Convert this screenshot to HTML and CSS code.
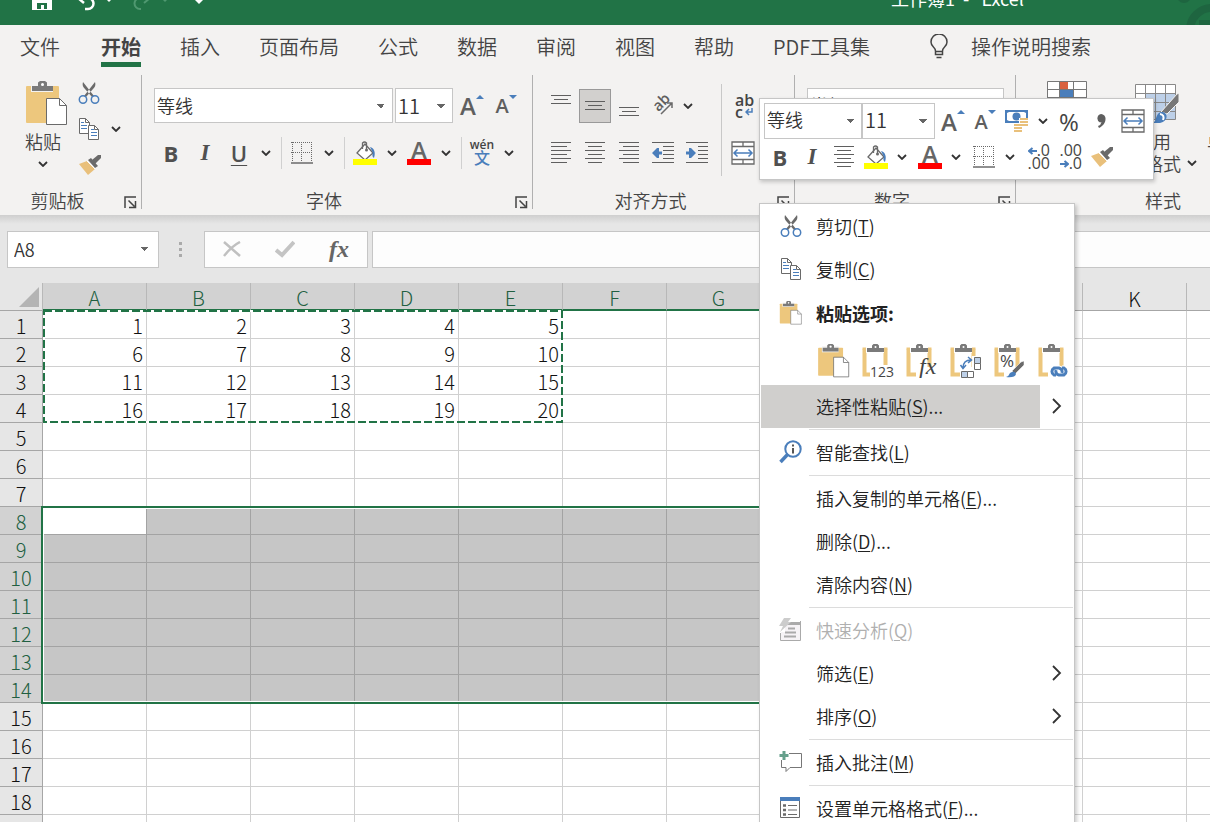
FILE: index.html
```html
<!DOCTYPE html>
<html lang="zh-CN">
<head>
<meta charset="utf-8">
<title>工作簿1 - Excel</title>
<link rel="stylesheet" href="styles.css">
</head>
<body>
<svg class="defs" aria-hidden="true">
  <symbol id="chev" viewBox="0 0 10 6"><path d="M1 1l4 4 4-4" fill="none" stroke="#333" stroke-width="1.8"/></symbol>
  <symbol id="cut" viewBox="0 0 22 24">
    <path d="M5 1c-1 3 0 5 2 7l7 8 2-1zM17 1c1 3 0 5-2 7l-7 8-2-1z" fill="#6a6a6a"/>
    <circle cx="5" cy="18.500" r="3.700" fill="none" stroke="#4a7ebb" stroke-width="1.500"/><circle cx="17" cy="18.500" r="3.700" fill="none" stroke="#4a7ebb" stroke-width="1.500"/>
  </symbol>
  <symbol id="copy" viewBox="0 0 22 24">
    <path d="M1.500 1.500h6l4 4v11h-10z" fill="#fff" stroke="#6a6a6a"/><path d="M7.500 1.500v4h4" fill="none" stroke="#6a6a6a"/>
    <path d="M3 5.500h3M3 8.500h6M3 11.500h6" stroke="#4a7ebb"/>
    <path d="M10.500 8.500h6l4 4v10h-10z" fill="#fff" stroke="#6a6a6a"/><path d="M16.500 8.500v4h4" fill="none" stroke="#6a6a6a"/>
    <path d="M13 12.500h3M13 15.500h6M13 18.500h6" stroke="#4a7ebb"/>
  </symbol>
  <symbol id="brush" viewBox="0 0 24 22">
    <path d="M1 10l8-3 8 8-7 6z" fill="#e9c07b"/><path d="M10 6l3-2 7 8-3 2z" fill="#6a6a6a"/><path d="M14 6l6-5h3v3l-6 6z" fill="#6a6a6a"/><path d="M9 7l8 8" stroke="#fff"/>
  </symbol>
  <symbol id="paste" viewBox="0 0 42 45">
    <rect y="5" width="33" height="37" rx="1" fill="#edc77d"/>
    <path d="M5 3h22v8H5z" fill="#f3f2f1"/><path d="M6 5h6V1.500L14 0h5l2 1.500V5h6v5H6z" fill="#7a7a7a"/><circle cx="16.500" cy="3.500" r="1.500" fill="#fff"/>
    <path d="M20.500 17.500h13l7 7v19h-20z" fill="#fff" stroke="#6a6a6a"/><path d="M33.500 17.500v7h7" fill="none" stroke="#6a6a6a"/>
  </symbol>
  <symbol id="clip" viewBox="0 0 30 34">
    <path d="M2.500 5v25.500H10M23.500 23V5" fill="none" stroke="#edc77d" stroke-width="4"/><path d="M.500 4.500h25" stroke="#edc77d" stroke-width="2"/>
    <path d="M4 1h18v8H4z" fill="#fff"/><path d="M5 4h5V1.500L11.500 0h4L17 1.500V4h5v4H5z" fill="#7a7a7a"/><circle cx="13.500" cy="3" r="1" fill="#fff"/>
  </symbol>
  <symbol id="borders" viewBox="0 0 22 22"><path d="M1.500 0v20M10.500 0v20M20.500 0v20M0 .5h22M0 10.500h22" stroke="#6a6a6a" stroke-dasharray="1 1"/><path d="M0 21h22" stroke="#6a6a6a" stroke-width="1.500"/></symbol>
  <symbol id="bucket" viewBox="0 0 26 24">
    <path d="M13 3l8 9-8 7-8-7z" fill="#fff" stroke="#6a6a6a" stroke-width="1.300"/><path d="M10.500 8V2q2-2 4 0v6" fill="none" stroke="#6a6a6a" stroke-width="1.300"/><circle cx="14.500" cy="9" r="1.500" fill="#6a6a6a"/>
    <path d="M18 6c4 1 6 5 4 11-2-1-2-4-1-5z" fill="#4a7ebb"/><path d="M1 18h24v6H1z" fill="#ff0"/>
  </symbol>
  <symbol id="merge" viewBox="0 0 24 24"><path d="M1 1h22v22H1zM1 5.500h22M1 18.500h22M12 1v4.500M12 18.500V23" fill="#fff" stroke="#6a6a6a" stroke-width="1.300"/><path d="M3 12h18M6.500 8.500L3 12l3.500 3.500M17.500 8.500L21 12l-3.500 3.500" fill="none" stroke="#4a7ebb" stroke-width="1.500"/></symbol>
  <symbol id="launch" viewBox="0 0 13 13"><path d="M1 12V1h11M4.500 4.500l6 6M11.500 5v6.500H5" fill="none" stroke="#444" stroke-width="1.500"/></symbol>
  <symbol id="center" viewBox="0 0 20 22"><path d="M0 .5h20M3 4.500h14M0 8.500h20M3 12.500h14M0 16.500h20M3 20.500h14" stroke="#5f5f5f"/></symbol>
  <symbol id="more" viewBox="0 0 10 16"><path d="M1 1l7 7-7 7" fill="none" stroke="#333" stroke-width="1.800"/></symbol>
  <symbol id="up" viewBox="0 0 8 4"><path d="M0 4l4-4 4 4z" fill="#4a7ebb"/></symbol>
  <symbol id="down" viewBox="0 0 8 4"><path d="M0 0l4 4 4-4z" fill="#4a7ebb"/></symbol>
</svg>

<div class="app">
  <header class="titlebar">
    <button class="qat" aria-label="保存"><svg width="20" height="20" viewBox="0 0 20 20"><path d="M0 0h20v20H0z" fill="#fff"/><path d="M4 1h12v9H4zM5 13h10v6H5z" fill="#217346"/><path d="M9 15h3v5H9z" fill="#fff"/></svg></button>
    <button class="qat undo" aria-label="撤消"><svg width="20" height="22" viewBox="0 0 20 22"><path d="M2 9h10a5 5 0 0 1 0 11H9M8 3L2 9l6 5" fill="none" stroke="#fff" stroke-width="2.500"/></svg></button>
    <svg class="qat-arrow" width="6" height="8"><path d="M0 3h6l-3 3z" fill="#fff"/></svg>
    <button class="qat redo" aria-label="重做"><svg width="20" height="22" viewBox="0 0 20 22"><path d="M18 9H8a5 5 0 0 0 0 11h1M12 3l6 6-6 5" fill="none" stroke="#4f9870" stroke-width="2"/></svg></button>
    <svg class="qat-arrow" width="6" height="8"><path d="M0 3h6l-3 3z" fill="#4f9870"/></svg>
    <svg class="qat-end" width="10" height="8"><path d="M0 3h10l-5 5z" fill="#fff"/></svg>
    <span class="book">工作簿1&nbsp; -&nbsp;&nbsp; Excel</span>
    <svg class="deco" width="40" height="25" viewBox="0 0 40 25"><circle cx="14" cy="-4" r="7" fill="#1e6540"/><circle cx="42" cy="30" r="22" fill="none" stroke="#1e6540" stroke-width="8"/><path d="M29 20h11v5H29z" fill="#1e6540"/></svg>
  </header>

  <nav class="tabs">
    <button class="tab file">文件</button><button class="tab active">开始</button><button class="tab">插入</button><button class="tab">页面布局</button><button class="tab">公式</button><button class="tab">数据</button><button class="tab">审阅</button><button class="tab">视图</button><button class="tab">帮助</button><button class="tab">PDF工具集</button>
    <button class="tab tell"><svg width="18" height="25" viewBox="0 0 18 25"><path d="M5.500 17c0-4-4.500-4-4.500-9a8 8 0 0 1 16 0c0 5-4.500 5-4.500 9v3.500h-7zM5.500 17.500h7M6.500 23.500h5" fill="none" stroke="#444" stroke-width="1.500"/></svg>操作说明搜索</button>
  </nav>

  <div class="ribbon">
    <section class="group clipboard">
      <div class="body">
        <button class="big"><svg class="board" width="42" height="45"><use href="#paste"/></svg><span>粘贴</span><svg class="chev" width="10" height="6"><use href="#chev"/></svg></button>
        <div class="stack">
          <button class="mini" aria-label="剪切"><svg width="22" height="24"><use href="#cut"/></svg></button>
          <button class="mini" aria-label="复制"><svg width="22" height="24"><use href="#copy"/></svg><svg class="chev" width="10" height="6"><use href="#chev"/></svg></button>
          <button class="mini" aria-label="格式刷"><svg width="24" height="22"><use href="#brush"/></svg></button>
        </div>
      </div>
      <footer class="caption"><span>剪贴板</span><button class="launch" aria-label="剪贴板设置"><svg width="13" height="13"><use href="#launch"/></svg></button></footer>
    </section>

    <section class="group font">
      <div class="rows">
        <div class="row">
          <select class="combo face" aria-label="字体"><option>等线</option></select>
          <select class="combo size" aria-label="字号"><option>11</option></select>
          <button class="btn grow" aria-label="增大字号"><b>A</b><svg width="8" height="4"><use href="#up"/></svg></button>
          <button class="btn shrink" aria-label="减小字号"><b>A</b><svg width="8" height="4"><use href="#down"/></svg></button>
        </div>
        <div class="row">
          <button class="btn bold">B</button><button class="btn italic">I</button><button class="btn under">U</button><button class="drop" aria-label="下划线选项"><svg width="10" height="6"><use href="#chev"/></svg></button>
          <i class="sep"></i>
          <button class="btn" aria-label="边框"><svg width="22" height="22"><use href="#borders"/></svg></button><button class="drop" aria-label="边框选项"><svg width="10" height="6"><use href="#chev"/></svg></button>
          <i class="sep"></i>
          <button class="btn" aria-label="填充颜色"><svg width="26" height="24"><use href="#bucket"/></svg></button><button class="drop" aria-label="填充选项"><svg width="10" height="6"><use href="#chev"/></svg></button>
          <button class="btn" aria-label="字体颜色"><b class="color">A</b></button><button class="drop" aria-label="字体颜色选项"><svg width="10" height="6"><use href="#chev"/></svg></button>
          <i class="sep"></i>
          <button class="btn pinyin"><span>wén</span><span class="han">文</span></button><button class="drop" aria-label="拼音选项"><svg width="10" height="6"><use href="#chev"/></svg></button>
        </div>
      </div>
      <footer class="caption"><span>字体</span><button class="launch" aria-label="字体设置"><svg width="13" height="13"><use href="#launch"/></svg></button></footer>
    </section>

    <section class="group align">
      <div class="body">
        <div class="rows">
          <div class="row">
            <button class="btn" aria-label="顶端对齐"><svg width="20" height="22"><path d="M0 .5h20M3 4.500h14M0 8.500h20" stroke="#5f5f5f"/></svg></button>
            <button class="btn on" aria-label="垂直居中"><svg width="20" height="22"><path d="M0 6.500h20M3 10.500h14M0 14.500h20" stroke="#5f5f5f"/></svg></button>
            <button class="btn" aria-label="底端对齐"><svg width="20" height="22"><path d="M0 12.500h20M3 16.500h14M0 20.500h20" stroke="#5f5f5f"/></svg></button>
            <button class="btn orient" aria-label="方向"><svg width="22" height="22" viewBox="0 0 22 22"><text x="3" y="17" transform="rotate(-45 5 13)" class="ab">ab</text><path d="M9 19L20 8M15 8h5v5" fill="none" stroke="#6a6a6a" stroke-width="1.500"/></svg></button><button class="drop tight" aria-label="方向选项"><svg width="10" height="6"><use href="#chev"/></svg></button>
          </div>
          <div class="row">
            <button class="btn" aria-label="左对齐"><svg width="20" height="22"><path d="M0 .5h20M0 4.500h16M0 8.500h20M0 12.500h16M0 16.500h20M0 20.500h16" stroke="#5f5f5f"/></svg></button>
            <button class="btn" aria-label="居中"><svg width="20" height="22"><use href="#center"/></svg></button>
            <button class="btn" aria-label="右对齐"><svg width="20" height="22"><path d="M0 .5h20M4 4.500h16M0 8.500h20M4 12.500h16M0 16.500h20M4 20.500h16" stroke="#5f5f5f"/></svg></button>
            <button class="btn" aria-label="减少缩进"><svg width="22" height="22"><path d="M0 .5h22M11 4.500h11M11 8.500h11M11 12.500h11M11 16.500h11M0 20.500h22" stroke="#5f5f5f"/><path d="M0 11l5-5h2v3.500h3v3H7V16H5z" fill="#4a7ebb"/></svg></button>
            <button class="btn" aria-label="增加缩进"><svg width="22" height="22"><path d="M0 .5h22M12 4.500h10M12 8.500h10M12 12.500h10M12 16.500h10M0 20.500h22" stroke="#5f5f5f"/><path d="M10 11L5 6H3v3.500H0v3h3V16h2z" fill="#4a7ebb"/></svg></button>
          </div>
        </div>
        <i class="rule"></i>
        <div class="rows">
          <div class="row"><button class="btn wrap" aria-label="自动换行"><span>ab</span><span>c<svg width="8" height="8"><path d="M7 0v4H1M4 1L1 4l3 3" fill="none" stroke="#4a7ebb" stroke-width="1.500"/></svg></span></button></div>
          <div class="row"><button class="btn" aria-label="合并后居中"><svg width="24" height="24"><use href="#merge"/></svg></button></div>
        </div>
      </div>
      <footer class="caption"><span>对齐方式</span><button class="launch" aria-label="对齐设置"><svg width="13" height="13"><use href="#launch"/></svg></button></footer>
    </section>

    <section class="group number">
      <div class="rows"><div class="row"><select class="combo format" aria-label="数字格式"><option>常规</option></select></div></div>
      <footer class="caption"><span>数字</span><button class="launch" aria-label="数字设置"><svg width="13" height="13"><use href="#launch"/></svg></button></footer>
    </section>

    <section class="group style">
      <div class="body">
        <button class="big wide"><svg width="40" height="42" viewBox="0 0 40 42"><path d="M.5.500h39v41H.5zM0 8.500h40M0 16.500h40M12.500 0v42M26.500 0v42" fill="#fff" stroke="#777"/><path d="M13 1h8v7h-8z" fill="#d9623f"/><path d="M13 9h13v7H13z" fill="#4a7ebb"/></svg><span>条件格式</span></button>
        <button class="big wide"><svg class="tablefmt" width="46" height="42" viewBox="0 0 46 42"><path d="M1.500 3.500h40v35h-40z" fill="#fff"/><path d="M11 12h30v26H11z" fill="#bdd0e8"/><path d="M1.500 3.500h40v35h-40zM1 12.500h41M1 21.500h41M1 30.500h41M11.500 3v35M21.500 3v35M31.500 3v35" fill="none" stroke="#888"/><path d="M27 31L43 13l2-1v9L33 33z" fill="#777" stroke="#f3f2f1"/><path d="M18 42c5 0 3-11 10-11 6 0 7 9-2 11z" fill="#4a7ebb"/><path d="M26 33q5 1 3 6" fill="none" stroke="#fff" stroke-width="2"/></svg><span>套用</span><span>表格格式<svg class="chev" width="10" height="6"><use href="#chev"/></svg></span></button>
        <button class="big wide cellstyle"><svg width="42" height="42"><path d="M5.500.500h36v41h-36z" fill="#fff" stroke="#999"/></svg><span>单元格</span><span>样式</span></button>
      </div>
      <footer class="caption"><span>样式</span></footer>
    </section>
  </div>

  <div class="formula">
    <select class="combo name" aria-label="名称框"><option>A8</option></select>
    <svg class="dots" width="3" height="15"><path d="M0 0h3v3H0zM0 6h3v3H0zM0 12h3v3H0z" fill="#aaa"/></svg>
    <div class="fxbox">
      <button aria-label="取消"><svg width="18" height="16"><path d="M1 1l16 14M17 1Q9 5 1 15" fill="none" stroke="#c0c0c0" stroke-width="2.500"/></svg></button>
      <button aria-label="输入"><svg width="20" height="18"><path d="M1 10l6 5L19 2" fill="none" stroke="#c4c4c4" stroke-width="4"/></svg></button>
      <button class="fx" aria-label="插入函数">fx</button>
    </div>
    <input class="input" type="text" aria-label="编辑栏">
  </div>

  <main class="sheet">
    <table class="grid">
      <colgroup><col class="rowhead"><col span="12" class="col"></colgroup>
      <thead><tr class="heads"><th class="corner"><svg width="20" height="20"><path d="M20 0v20H0z" fill="#b4b4b4"/></svg></th><th class="sel">A</th><th class="sel">B</th><th class="sel">C</th><th class="sel">D</th><th class="sel">E</th><th class="sel">F</th><th class="sel">G</th><th class="sel">H</th><th>I</th><th>J</th><th>K</th><th>L</th></tr></thead>
      <tbody>
        <tr><th>1<td>1<td>2<td>3<td>4<td>5<td><td><td><td><td><td><td>
        <tr><th>2<td>6<td>7<td>8<td>9<td>10<td><td><td><td><td><td><td>
        <tr><th>3<td>11<td>12<td>13<td>14<td>15<td><td><td><td><td><td><td>
        <tr><th>4<td>16<td>17<td>18<td>19<td>20<td><td><td><td><td><td><td>
        <tr><th>5<td><td><td><td><td><td><td><td><td><td><td><td>
        <tr><th>6<td><td><td><td><td><td><td><td><td><td><td><td>
        <tr><th>7<td><td><td><td><td><td><td><td><td><td><td><td>
      </tbody>
      <tbody class="picked">
        <tr><th>8<td class="cursor"><td><td><td><td><td><td><td><td><td><td><td>
        <tr><th>9<td><td><td><td><td><td><td><td><td><td><td><td>
        <tr><th>10<td><td><td><td><td><td><td><td><td><td><td><td>
        <tr><th>11<td><td><td><td><td><td><td><td><td><td><td><td>
        <tr><th>12<td><td><td><td><td><td><td><td><td><td><td><td>
        <tr><th>13<td><td><td><td><td><td><td><td><td><td><td><td>
        <tr><th>14<td><td><td><td><td><td><td><td><td><td><td><td>
      </tbody>
      <tbody>
        <tr><th>15<td><td><td><td><td><td><td><td><td><td><td><td>
        <tr><th>16<td><td><td><td><td><td><td><td><td><td><td><td>
        <tr><th>17<td><td><td><td><td><td><td><td><td><td><td><td>
        <tr><th>18<td><td><td><td><td><td><td><td><td><td><td><td>
        <tr><th><td><td><td><td><td><td><td><td><td><td><td><td>
      </tbody>
    </table>
    <svg class="ants" width="521" height="113"><path d="M1 1h518v111H1z" fill="none" stroke="#fff" stroke-width="2"/><path d="M1 1h518v111H1z" fill="none" stroke="#217346" stroke-width="2" stroke-dasharray="8 3"/></svg>
    <div class="outline"></div>
  </main>

  <div class="float">
    <div class="row">
      <select class="combo face" aria-label="字体"><option>等线</option></select><select class="combo size" aria-label="字号"><option>11</option></select>
      <button class="btn grow" aria-label="增大字号"><b>A</b><svg width="8" height="4"><use href="#up"/></svg></button>
      <button class="btn shrink" aria-label="减小字号"><b>A</b><svg width="8" height="4"><use href="#down"/></svg></button>
      <button class="btn" aria-label="会计数字格式"><svg width="24" height="24" viewBox="0 0 24 24"><path d="M0 1h23v13H0z" fill="#4a7ebb"/><path d="M2 4l2-1h15l2 1v7l-2 1H4l-2-1z" fill="#fff"/><circle cx="11.500" cy="7.500" r="4" fill="#4a7ebb"/><path d="M14 9h9v9h-6v5H8v-8h6z" fill="#fff"/><path d="M15 10h8M15 13h8M15 16h8M9 16h8M9 19h8M9 22h8" stroke="#e9c07b" stroke-width="2.200"/></svg></button><button class="drop" aria-label="货币选项"><svg width="10" height="6"><use href="#chev"/></svg></button>
      <button class="btn percent">%</button>
      <button class="btn" aria-label="千位分隔样式"><svg width="10" height="14"><path d="M5 0a4.500 4.500 0 0 0-1 8.500L5.500 8Q5 11 2 12l1 2c4-2 6.500-5 6.500-9A4.500 4.500 0 0 0 5 0" fill="#5f5f5f"/></svg></button>
      <button class="btn" aria-label="合并后居中"><svg width="24" height="24"><use href="#merge"/></svg></button>
    </div>
    <div class="row second">
      <button class="btn bold">B</button><button class="btn italic">I</button>
      <button class="btn" aria-label="居中"><svg width="20" height="22"><use href="#center"/></svg></button>
      <button class="btn" aria-label="填充颜色"><svg width="26" height="24"><use href="#bucket"/></svg></button><button class="drop" aria-label="填充选项"><svg width="10" height="6"><use href="#chev"/></svg></button>
      <button class="btn" aria-label="字体颜色"><b class="color">A</b></button><button class="drop" aria-label="字体颜色选项"><svg width="10" height="6"><use href="#chev"/></svg></button>
      <button class="btn" aria-label="边框"><svg width="22" height="22"><use href="#borders"/></svg></button><button class="drop" aria-label="边框选项"><svg width="10" height="6"><use href="#chev"/></svg></button>
      <button class="btn decimal"><span><svg width="9" height="8"><path d="M9 4H1M4.500 1L1 4l3.500 3" fill="none" stroke="#4a7ebb" stroke-width="2"/></svg>.0</span><span>.00</span></button>
      <button class="btn decimal"><span>.00</span><span><svg width="9" height="8"><path d="M0 4h8M4.500 1L8 4 4.500 7" fill="none" stroke="#4a7ebb" stroke-width="2"/></svg>.0</span></button>
      <button class="btn" aria-label="格式刷"><svg width="24" height="22"><use href="#brush"/></svg></button>
    </div>
  </div>

  <div class="menu" role="menu">
    <button class="item"><svg width="22" height="24"><use href="#cut"/></svg><span>剪切(<u>T</u>)</span></button>
    <button class="item"><svg width="22" height="24"><use href="#copy"/></svg><span>复制(<u>C</u>)</span></button>
    <div class="item head"><svg width="22" height="24"><use href="#paste"/></svg><span>粘贴选项:</span></div>
    <div class="pastes">
      <button aria-label="粘贴"><svg width="32" height="34"><use href="#paste"/></svg></button>
      <button aria-label="值"><svg width="32" height="34"><use href="#clip" width="30" height="34"/><path d="M8 21h24v13H8z" fill="#fff"/><text x="8" y="33" class="t123">123</text></svg></button>
      <button aria-label="公式"><svg width="32" height="34"><use href="#clip" width="30" height="34"/><text x="13" y="30" class="tfx">fx</text></svg></button>
      <button aria-label="转置"><svg width="32" height="34"><use href="#clip" width="30" height="34"/><path d="M22 12h9v21H10v-7h12z" fill="#fff"/><path d="M24.500 13.500h6v6h-6zM11.500 27.500h6v6h-6z" fill="#bdd0e8" stroke="#6a6a6a"/><path d="M24.500 19.500h6v6h-6zM17.500 27.500h6v6h-6z" fill="#fff" stroke="#6a6a6a"/><path d="M13 24q0-8 8-8M10.500 21l2.500 3.500 3-3.500M18 13l3.500 3-3.500 3" fill="none" stroke="#4a7ebb" stroke-width="1.500"/></svg></button>
      <button aria-label="格式"><svg width="32" height="34"><use href="#clip" width="30" height="34"/><text x="6" y="23" class="tpc">%</text><path d="M18 27l9-9 3-1v4l-9 9z" fill="#6a6a6a" stroke="#fff" stroke-width=".5"/><path d="M12 33q3-1 4-4 5-3 6 1-1 4-10 3" fill="#4a7ebb"/></svg></button>
      <button aria-label="粘贴链接"><svg width="32" height="34"><use href="#clip" width="30" height="34"/><path d="M18 31h-2a4 4 0 0 1 0-7h5a4 4 0 0 1 3 5M24 24h2a4 4 0 0 1 0 7h-5a4 4 0 0 1-3-5" fill="none" stroke="#fff" stroke-width="5"/><path d="M18 31h-2a4 4 0 0 1 0-7h5a4 4 0 0 1 3 5M24 24h2a4 4 0 0 1 0 7h-5a4 4 0 0 1-3-5" fill="none" stroke="#4a7ebb" stroke-width="3"/></svg></button>
    </div>
    <button class="item hover"><i></i><span>选择性粘贴(<u>S</u>)...</span><svg class="arrow" width="10" height="16"><use href="#more"/></svg></button>
    <hr>
    <button class="item"><svg width="24" height="24"><circle cx="14" cy="9" r="7.700" fill="#fff" stroke="#4a7ebb" stroke-width="2"/><path d="M9 14l-7.500 8" stroke="#4a7ebb" stroke-width="3.500"/><path d="M14 8v5.500M14 4.500v2" stroke="#555" stroke-width="2"/></svg><span>智能查找(<u>L</u>)</span></button>
    <hr>
    <button class="item"><i></i><span>插入复制的单元格(<u>E</u>)...</span></button>
    <button class="item"><i></i><span>删除(<u>D</u>)...</span></button>
    <button class="item"><i></i><span>清除内容(<u>N</u>)</span></button>
    <hr>
    <button class="item" disabled><svg width="22" height="24"><path d="M6 4h15v18H2v-8h4z" fill="#f6f3f6"/><path d="M8 4h13v3H7z" fill="#aaa"/><path d="M21.500 3v19.500h-20V15" fill="none" stroke="#aaa"/><path d="M9 10.500h7M6 14.500h11M5 18.500h12" stroke="#aaa" stroke-width="2"/><path d="M5 0h7L9 4h3L1 14l3-6H0z" fill="#ccc"/></svg><span>快速分析(<u>Q</u>)</span></button>
    <button class="item"><i></i><span>筛选(<u>E</u>)</span><svg class="arrow" width="10" height="16"><use href="#more"/></svg></button>
    <button class="item"><i></i><span>排序(<u>O</u>)</span><svg class="arrow" width="10" height="16"><use href="#more"/></svg></button>
    <hr>
    <button class="item"><svg width="24" height="24"><path d="M10 3.500h12.500v14H11l-4 4v-4H2.500V10" fill="none" stroke="#777"/><path d="M5 1v9M.500 5.500h9" stroke="#66a08c" stroke-width="3"/></svg><span>插入批注(<u>M</u>)</span></button>
    <hr>
    <button class="item"><svg width="22" height="24"><path d="M1.500 1.500h19v20h-19z" fill="#fff" stroke="#6a6a6a"/><path d="M1 1h20v4H1z" fill="#4a7ebb"/><path d="M9 9.500h9M9 14h9M9 18.500h9" stroke="#6a6a6a"/><path d="M4 9.500h3M4 14h3M4 18.500h3" stroke="#6a6a6a" stroke-width="2.500"/></svg><span>设置单元格格式(<u>F</u>)...</span></button>
  </div>
</div>
</body>
</html>
```
FILE: styles.css
```css
* { box-sizing: border-box; }
body { margin: 0; overflow: hidden; font-family: "Noto Sans CJK SC", "Noto Sans", sans-serif; font-size: 18px; font-weight: 350; color: #444; background: #e6e6e6; }
button { font: inherit; color: inherit; background: none; border: 0; padding: 0; display: flex; align-items: center; justify-content: center; flex: none; }
svg { flex: none; display: block; }
.defs { position: absolute; width: 0; height: 0; }
.app { position: relative; height: 100vh; overflow: hidden; display: flex; flex-direction: column; }

.titlebar { position: relative; flex: none; display: flex; align-items: center; height: 50px; margin-top: -25px; padding-left: 32px; background: #217346; color: #fff; }
.undo { margin-left: 24px; }
.redo { margin-left: 20px; }
.qat-arrow { margin-left: 10px; }
.qat-end { margin-left: 26px; }
.book { margin-left: 687px; padding-bottom: 5px; white-space: nowrap; font-weight: 400; }
.deco { position: absolute; right: 0; bottom: 0; }

.tabs { flex: none; display: flex; gap: 39px; height: 45px; padding-left: 20px; background: #f3f2f1; font-size: 20px; white-space: nowrap; }
.tab { position: relative; height: 43px; }
.file { padding-right: 2px; }
.active { font-weight: 700; }
.active::after { content: ""; position: absolute; left: 0; right: 0; bottom: 1px; height: 5px; background: #217346; }
.tell { gap: 23px; margin-left: 21px; }

.ribbon { flex: none; display: flex; padding: 5px 0 6px; background: #f3f2f1; white-space: nowrap; }
.group { flex: none; display: flex; flex-direction: column; justify-content: space-between; height: 134px; border-right: 1px solid #b0b0b0; }
.clipboard { width: 142px; }
.font { width: 391px; }
.align { width: 262px; }
.number { width: 221px; }
.style { width: 294px; border: 0; }
.body { display: flex; }
.clipboard .body { padding: 6px 0 0 21px; gap: 13px; }
.big { flex-direction: column; justify-content: flex-start; line-height: 24px; }
.clipboard .big { width: 44px; }
.board { margin: 0 0 3px 8px; }
.big .chev { margin: 8px 0 0; }
.stack { display: flex; flex-direction: column; gap: 12px; }
.mini { justify-content: flex-start; gap: 11px; height: 24px; }
.caption { position: relative; display: flex; justify-content: center; height: 17px; padding-right: 26px; line-height: 17px; }
.style .caption { padding: 0; }
.launch { position: absolute; right: 4px; bottom: 0; }
.rows { display: flex; flex-direction: column; gap: 12px; padding-top: 13px; }
.row { display: flex; align-items: center; height: 35px; }
.font .rows { padding-left: 12px; }
.align .rows { padding-left: 11px; }
.number .rows { padding-left: 12px; }

.combo { appearance: none; flex: none; height: 35px; margin: 0; padding: 0 2px 1px; border: 1px solid #c6c6c6; border-radius: 0; color: #333; font: inherit; background: linear-gradient(45deg, transparent 50%, #666 50%) right 11px center / 4px 4px no-repeat, linear-gradient(-45deg, transparent 50%, #666 50%) right 7px center / 4px 4px no-repeat, #fff; }
.face { width: 239px; }
.size { width: 58px; margin-left: 2px; font-size: 20px; }
.format { width: 197px; }
.btn { width: 34px; height: 34px; }
.drop { width: 20px; height: 34px; }
.tight { width: 16px; }
.sep { flex: none; width: 1px; height: 32px; margin: 0 3px 0 5px; background: #d0d0d0; }
.rule { width: 1px; height: 92px; margin: 9px 0 0 7px; background: #c8c8c8; }
.align .rule + .rows { padding-left: 4px; }
.align .btn.on { width: 32px; margin: 0 1px; background: #d2d0ce; border: 1px solid #999; }
.grow, .shrink { font-family: "Open Sans", sans-serif; color: #5f5f5f; }
.grow { margin-left: 2px; font-size: 24px; }
.shrink { font-size: 20px; }
.grow b, .shrink b { font-weight: 600; }
.grow svg, .shrink svg { margin-bottom: 18px; }
.bold, .under { font: 700 22px "Open Sans", sans-serif; color: #505050; }
.under { font-weight: 600; text-decoration: underline; text-decoration-thickness: 1px; text-underline-offset: 3px; }
.italic { font: italic 700 23px "Liberation Serif", serif; color: #505050; }
.color { width: 24px; height: 24px; border-bottom: 6px solid red; font: 600 24px/18px "Open Sans", sans-serif; color: #666; }
.pinyin { flex-direction: column; font: 600 12px/10px "Open Sans", sans-serif; }
.han { font: 500 16px/15px "Noto Sans CJK SC", sans-serif; color: #4a7ebb; }
.ab { font: 600 15px "Open Sans", sans-serif; fill: #5f5f5f; }
.wrap { flex-direction: column; align-items: flex-start; padding-left: 9px; font: 600 16px/12px "Open Sans", sans-serif; }
.wrap span { display: flex; align-items: center; gap: 2px; }
.style .body { padding: 6px 0 0 8px; }
.wide { width: 86px; }
.style .big { line-height: 22px; }
.style .big svg + span { margin-top: 7px; }
.wide span { display: flex; align-items: center; gap: 6px; }
.wide .chev { margin: 0; }
.tablefmt { margin-left: 8px; }
.cellstyle { width: 54px; margin-left: 11px; }

.formula { flex: none; display: flex; align-items: center; height: 68px; padding-left: 7px; background: linear-gradient(#cfcfcf, #e6e6e6 9px); }
.name { width: 152px; height: 37px; padding: 0 6px; background-position: right 14px center, right 10px center, 0 0; }
.dots { margin: 0 22px 0 20px; }
.fxbox { flex: none; display: flex; align-items: center; justify-content: space-between; width: 164px; height: 37px; padding: 0 18px; border: 1px solid #c6c6c6; background: #fdfdfd; }
.fx { font: italic 700 24px "Liberation Serif", serif; color: #666; }
.input { flex: 1; min-width: 0; height: 37px; margin-left: 4px; border: 1px solid #c6c6c6; border-right: 0; background: #fdfdfd; }

.sheet { position: relative; flex: 1; min-height: 0; overflow: hidden; background: #fff; }
.grid { width: 1291px; table-layout: fixed; border-collapse: separate; border-spacing: 0; color: #111; font-size: 20px; font-weight: 300; line-height: 25px; }
.rowhead { width: 43px; }
.col { width: 104px; }
.grid th, .grid td { height: 28px; padding: 2px 0 0; border-right: 1px solid #d0d0d0; border-bottom: 1px solid #d0d0d0; }
.grid th { font-weight: 300; background: #e6e6e6; border-color: #a6a6a6; }
.grid td { padding-right: 3px; text-align: right; }
.grid .corner { padding: 0; }
.grid .corner svg { margin: 1px 0 0 19px; }
.grid .heads th { border-right-color: #b8b8b8; line-height: 22px; padding-top: 4px; }
.grid .heads .corner { padding: 0; }
.grid .sel { background: #d2d2d2; color: #215f41; border-bottom: 2px solid #217346; }
.picked th { background: #d2d2d2; color: #215f41; }
.picked td:nth-child(-n+9) { background: #c6c6c6; border-color: #a3a3a3; }
.picked .cursor.cursor { background: #fff; }
.ants { position: absolute; left: 43px; top: 27px; }
.outline { position: absolute; left: 41px; top: 223px; width: 835px; height: 198px; border: 2px solid #217346; box-shadow: inset 0 0 0 1px #fff; }

.float { position: absolute; left: 759px; top: 98px; width: 395px; height: 82px; padding: 4px; background: #fff; border: 1px solid #c6c6c6; box-shadow: 1px 2px 4px #0003; }
.float .row { height: 36px; }
.float .combo { height: 36px; padding-bottom: 4px; }
.float .face { width: 98px; }
.float .size { width: 73px; margin-left: 0; }
.float .btn { width: 32px; }
.second .drop { margin-right: 2px; }
.percent { font: 400 24px "Open Sans", sans-serif; }
.decimal { flex-direction: column; align-items: flex-end; padding-right: 4px; font: 400 16px/13px "Open Sans", sans-serif; }
.float .decimal span { display: flex; align-items: center; }

.menu { position: absolute; left: 759px; top: 203px; width: 316px; padding: 1px; background: #fff; border: 1px solid #c6c6c6; box-shadow: 2px 2px 4px #0003; color: #222; }
.item { display: flex; align-items: center; justify-content: flex-start; width: 100%; height: 43px; padding: 0 0 2px 18px; white-space: nowrap; }
.item > :first-child { width: 24px; }
.item > span { margin-left: 13px; }
.item:disabled { color: #b0b0b0; }
.item u { text-decoration-thickness: 1px; text-underline-offset: 2px; }
.arrow { margin: 0 11px 0 auto; }
.head { height: 46px; font-weight: 700; }
.hover { background: linear-gradient(#d0cfcd, #d0cfcd) left / calc(100% - 33px) 100% no-repeat; }
.menu hr { height: 1px; margin: 1px 0 1px 48px; border: 0; background: #dcdcdc; }
.pastes { display: flex; justify-content: space-between; height: 48px; padding: 0 3px 0 57px; }
.t123 { font: 500 14px "Open Sans", sans-serif; fill: #444; }
.tfx { font: italic 24px "Liberation Serif", serif; fill: #444; }
.tpc { font: 500 17px "Open Sans", sans-serif; fill: #444; }
```
